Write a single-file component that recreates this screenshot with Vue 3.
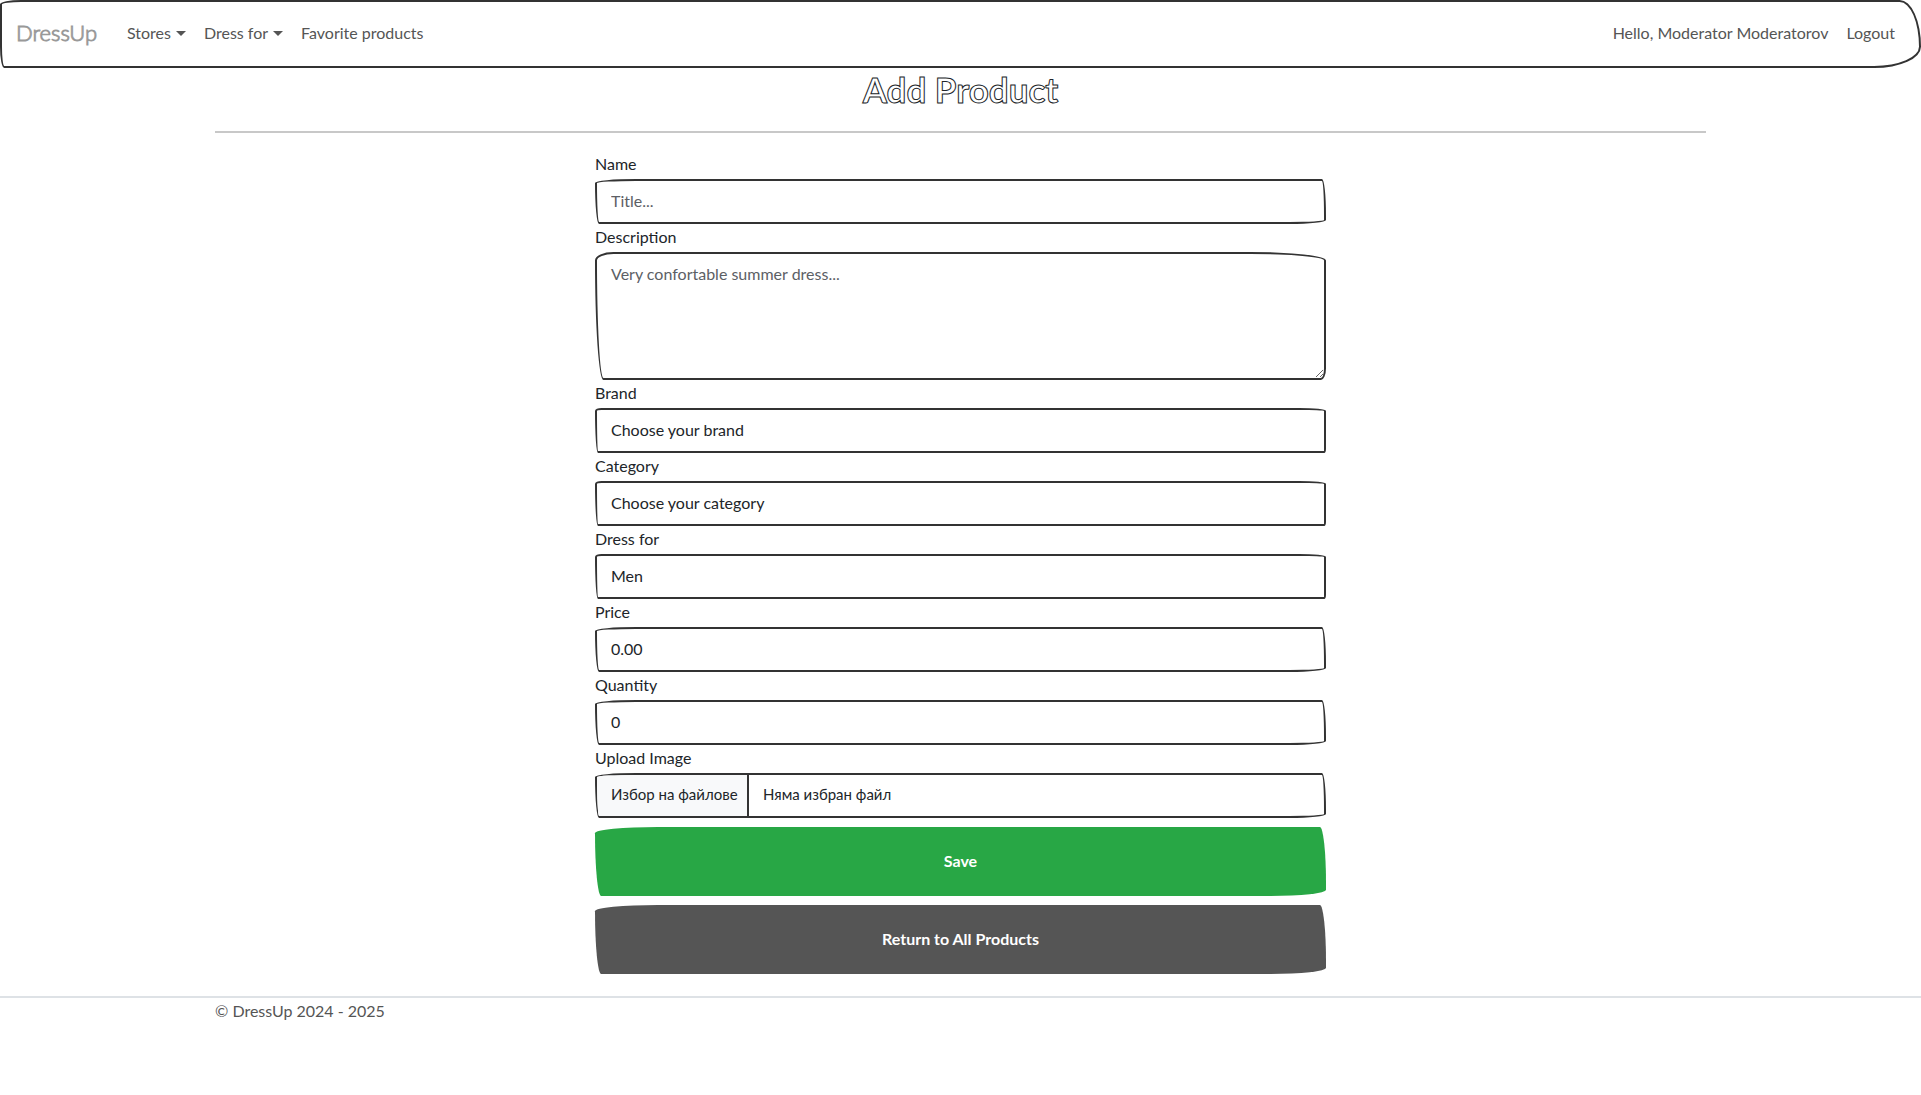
<script setup>
import { ref } from 'vue'

const brands = ['Choose your brand']
const categories = ['Choose your category']
const audiences = ['Men', 'Women', 'Kids']

const product = ref({
  name: '',
  description: '',
  brand: brands[0],
  category: categories[0],
  audience: audiences[0],
  price: '0.00',
  quantity: '0'
})
</script>

<template>
  <div class="page">
    <header>
      <nav class="navbar">
        <a class="brand sketch" href="#">DressUp</a>
        <button class="nav-link" type="button">Stores<span class="caret"></span></button>
        <button class="nav-link" type="button">Dress for<span class="caret"></span></button>
        <a class="nav-link" href="#">Favorite products</a>
        <span class="spacer"></span>
        <a class="nav-link" href="#">Hello, Moderator Moderatorov</a>
        <button class="nav-link" type="button">Logout</button>
      </nav>
    </header>

    <main class="container">
      <h1 class="sketch">Add Product</h1>
      <hr />
      <form @submit.prevent>
        <label for="name">Name</label>
        <input id="name" v-model="product.name" class="field" type="text" placeholder="Title..." />

        <label for="description">Description</label>
        <textarea id="description" v-model="product.description" class="field area" placeholder="Very confortable summer dress..."></textarea>

        <label for="brand">Brand</label>
        <select id="brand" v-model="product.brand" class="field select">
          <option v-for="b in brands" :key="b">{{ b }}</option>
        </select>

        <label for="category">Category</label>
        <select id="category" v-model="product.category" class="field select">
          <option v-for="c in categories" :key="c">{{ c }}</option>
        </select>

        <label for="audience">Dress for</label>
        <select id="audience" v-model="product.audience" class="field select">
          <option v-for="a in audiences" :key="a">{{ a }}</option>
        </select>

        <label for="price">Price</label>
        <input id="price" v-model="product.price" class="field" type="text" inputmode="decimal" />

        <label for="quantity">Quantity</label>
        <input id="quantity" v-model="product.quantity" class="field" type="text" inputmode="numeric" />

        <label for="image">Upload Image</label>
        <div class="field file">
          <span class="file-button">Избор на файлове</span>
          <span class="file-name">Няма избран файл</span>
          <input id="image" type="file" multiple />
        </div>

        <button class="btn save" type="submit">Save</button>
        <a class="btn back" href="#">Return to All Products</a>
      </form>
    </main>

    <footer>
      <div class="container">© DressUp 2024 - 2025</div>
    </footer>
  </div>
</template>

<style>
body {
  margin: 0;
  background: #fff;
}
</style>

<style scoped>
.page {
  font-family: Lato, "Liberation Sans", sans-serif;
  font-size: 16px;
  line-height: 24px;
  color: #212529;
}

.page * {
  box-sizing: border-box;
}

.sketch {
  color: transparent;
}

.navbar {
  display: flex;
  align-items: center;
  height: 68px;
  padding: 0 15px 2px 14px;
  border: 2px solid #333;
  border-radius: 25px 25px 55px 5px / 5px 55px 25px 25px;
}

.brand {
  min-width: 82px;
  margin-right: 20px;
  font-size: 22px;
  font-weight: 300;
  text-decoration: none;
  -webkit-text-stroke: 1px #999;
}

.nav-link {
  display: flex;
  align-items: center;
  gap: 5px;
  padding: 8px 9px;
  border: 0;
  background: none;
  font: inherit;
  color: #555;
  text-decoration: none;
  white-space: nowrap;
}

.caret {
  border: 5px solid transparent;
  border-top-color: #555;
  border-bottom: 0;
}

.spacer {
  flex: 1;
}

.container {
  max-width: 1515px;
  margin: 0 auto;
  padding: 0 12px;
}

h1 {
  margin: 0;
  font-size: 35px;
  font-weight: 700;
  line-height: 42px;
  text-align: center;
  -webkit-text-stroke: 1px #212529;
}

hr {
  height: 2px;
  margin: 21px 0 18px;
  border: 0;
  background: #c8c8c8;
}

form {
  display: flex;
  flex-direction: column;
  max-width: 731px;
  margin: 0 auto;
}

label {
  height: 28px;
  line-height: 26px;
}

.field {
  width: 100%;
  height: 45px;
  margin: 0;
  padding: 0 14px 2px;
  border: 2px solid #333;
  border-radius: 255px 25px 225px 25px / 25px 225px 25px 255px;
  background: #fff;
  font: inherit;
  color: #212529;
  outline: none;
}

.field::placeholder {
  color: #5c6065;
  opacity: 1;
}

.area {
  height: 128px;
  padding: 8px 14px;
  resize: vertical;
}

.area,
.select {
  border-radius: 55px 225px 15px 25px / 25px 25px 35px 355px;
}

.select {
  appearance: none;
}

.file {
  position: relative;
  display: flex;
  align-items: stretch;
  padding: 0;
  overflow: hidden;
  font-size: 15px;
  line-height: 39px;
}

.file-button {
  width: 152px;
  padding-left: 14px;
  border-right: 2px solid #333;
  background: #f8f9fa;
  white-space: nowrap;
}

.file-name {
  padding-left: 14px;
}

.file input {
  position: absolute;
  inset: 0;
  width: 100%;
  opacity: 0;
}

.btn {
  height: 69px;
  margin-top: 9px;
  border: 0;
  border-radius: 255px 25px 225px 25px / 25px 225px 25px 255px;
  font: inherit;
  font-weight: 700;
  line-height: 67px;
  color: #fff;
  text-align: center;
  text-decoration: none;
}

.save {
  padding: 0 0 2px;
  background: #28a745;
}

.back {
  background: #555;
}

footer {
  margin-top: 22px;
  border-top: 2px solid #dee2e6;
  line-height: 26px;
  color: #555;
}
</style>
